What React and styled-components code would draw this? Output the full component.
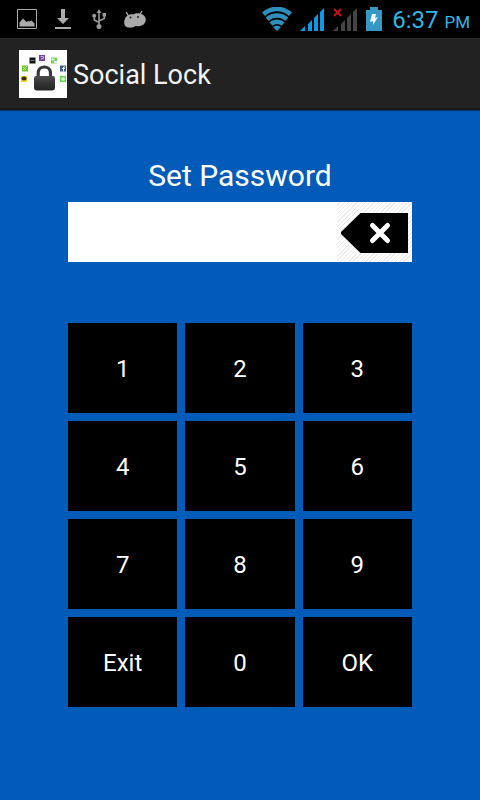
import React, { useState } from 'react';
import styled, { createGlobalStyle } from 'styled-components';

const GlobalStyle = createGlobalStyle`
  *, *::before, *::after { box-sizing: border-box; }
  body {
    margin: 0;
    background: #035bb9;
    font-family: Roboto, "Noto Sans", sans-serif;
  }
`;

const Screen = styled.div`
  display: flex;
  flex-direction: column;
  min-height: 100vh;
  background: #035bb9;
  color: #fff;
`;

const StatusBar = styled.header`
  display: flex;
  align-items: center;
  justify-content: space-between;
  height: 38px;
  padding: 0 10px 0 17px;
  background: #000;
`;

const Notifications = styled.div`
  display: flex;
  align-items: center;
  gap: 18px;
`;

const Indicators = styled.div`
  display: flex;
  align-items: center;
  gap: 8px;
`;

const Icon = styled.svg`
  display: block;
  flex: none;
`;

const Clock = styled.time`
  padding: 4px 0 0 2px;
  font-size: 24px;
  line-height: 34px;
  white-space: nowrap;
  color: #33b5e5;
`;

const Meridiem = styled.span`
  font-size: 17px;
`;

const ActionBar = styled.div`
  display: flex;
  align-items: center;
  gap: 6px;
  height: 72px;
  padding: 0 19px;
  background: #222;
  border-top: 1px solid #2c2a2a;
  border-bottom: 2px solid #191919;
  box-shadow: 0 1px 1px rgba(0, 0, 0, 0.4);
`;

const AppTitle = styled.h1`
  margin: 0;
  padding-top: 2px;
  font-size: 27px;
  line-height: 36px;
  font-weight: 400;
  color: #f3f3f3;
`;

const Content = styled.main`
  display: flex;
  flex-direction: column;
  padding: 48px 68px 92px;
`;

const FieldLabel = styled.label`
  padding-bottom: 8px;
  font-size: 30px;
  line-height: 36px;
  text-align: center;
`;

const Field = styled.div`
  display: flex;
  height: 60px;
  background: #fff;
`;

const PasswordInput = styled.input`
  flex: 1;
  min-width: 0;
  padding: 0 12px;
  border: 0;
  outline: 0;
  background: transparent;
  font: inherit;
  font-size: 28px;
  color: #000;
`;

const EraseButton = styled.button`
  flex: none;
  padding: 0;
  border: 0;
  background: repeating-linear-gradient(135deg, #fff 0 2px, #ececec 2px 3px);
  cursor: pointer;
`;

const Keypad = styled.div`
  display: grid;
  grid-template-columns: repeat(3, 1fr);
  grid-auto-rows: 90px;
  gap: 8px;
  margin-top: 61px;
`;

const Key = styled.button`
  padding: 2px 0 0;
  border: 0;
  background: #000;
  color: #fff;
  font: inherit;
  font-size: 24px;
  line-height: 28px;
  cursor: pointer;
`;

const keys = ['1', '2', '3', '4', '5', '6', '7', '8', '9', 'Exit', '0', 'OK'];

const PictureIcon = () => (
  <Icon width="20" height="20" viewBox="0 0 20 20" aria-hidden="true">
    <path d="M.5.5h19v19H.5z" fill="none" stroke="#aaa" />
    <path d="M2.500 17.500V13.500l3.500-4 3.500 3.500 1.500-1 2 .5 1.500-1 2 2 1 1v3z" fill="#aaa" />
  </Icon>
);

const DownloadIcon = () => (
  <Icon width="16" height="20" viewBox="0 0 16 20" aria-hidden="true">
    <path d="M6 0h4v9h4l-6 6-6-6h4zM0 18h16v2H0z" fill="#aaa" />
  </Icon>
);

const UsbIcon = () => (
  <Icon width="17" height="20" viewBox="-3 0 17 20" aria-hidden="true">
    <path d="M7 16V3M7 13.500L2.300 11V7M7 12l5.300-2.500V5" fill="none" stroke="#999" strokeWidth="1.600" />
    <path d="M7 0l2.500 4H4.500z" fill="#999" />
    <circle cx="7" cy="17.500" r="2.500" fill="#999" />
    <circle cx="2.200" cy="6.800" r="2" fill="#999" />
    <path d="M10.500 4h3.500v3.500h-3.500z" fill="#999" />
  </Icon>
);

const RobotIcon = () => (
  <Icon width="22" height="18" viewBox="0 0 22 18" aria-hidden="true">
    <path d="M2.200 2L4.500 6M18 1l-2.500 4" stroke="#aaa" strokeWidth="1.400" fill="none" />
    <path
      d="M3 6C5 4.500 7 4 9 4.500C11 3.200 14 3 16 3.500C20 4.500 22 7 21.800 10C21.500 13.500 19 15.500 16 16C14.500 16.300 13 16.300 11.500 16C10 17.200 7.500 17.800 5 17.600C2 17.400 .2 16 .2 13C.2 10 1 7.500 3 6z"
      fill="#aaa"
    />
    <circle cx="6.500" cy="7.500" r="1" fill="#222" />
    <circle cx="14" cy="7" r="1" fill="#222" />
  </Icon>
);

const WifiIcon = () => (
  <Icon width="30" height="24" viewBox="0 0 30 24" aria-hidden="true">
    <g fill="none" stroke="#2e8ebc" strokeWidth="4.600">
      <path d="M1.500 7.200a20 20 0 0 1 27 0" />
      <path d="M5.200 12.300a14.500 14.500 0 0 1 19.600 0" />
      <path d="M8.900 17a9.200 9.200 0 0 1 12.200 0" />
    </g>
    <path d="M11 20q4-3 8 0L15 24z" fill="#2e8ebc" />
  </Icon>
);

const SignalIcon = ({ color, missing }) => (
  <Icon width="25" height="24" viewBox="0 0 25 24" aria-hidden="true">
    <path
      d="M0 24l5-5v5zM8 24v-7l4-4v11zM14 24V11l4-4v17zM20 24V5l4-4v23z"
      fill={color}
    />
    {missing && <path d="M1 2l7 7M8 2L1 9" stroke="#c4141a" strokeWidth="1.800" fill="none" />}
  </Icon>
);

const BatteryIcon = () => (
  <Icon width="16" height="24" viewBox="0 0 16 24" aria-hidden="true">
    <path d="M4 0h8v3h4v21H0V3h4z" fill="#3598c5" />
    <path d="M6 7h4l-1 4 3-1-5 8v-4l-3 1z" fill="#eef8fc" />
  </Icon>
);

const AppIcon = () => (
  <Icon width="48" height="48" viewBox="0 0 48 48" aria-hidden="true">
    <defs>
      <linearGradient id="body" x1="0" y1="0" x2="0" y2="1">
        <stop offset="0" stopColor="#4c4c4c" />
        <stop offset="0.500" stopColor="#343434" />
        <stop offset="1" stopColor="#242424" />
      </linearGradient>
    </defs>
    <path d="M0 0h48v48H0z" fill="#fff" />
    <path d="M19.200 28v-5c0-8 12.300-8 12.300 0v5" fill="none" stroke="#383838" strokeWidth="3.200" />
    <path d="M17 26h17q2 0 2 3v8.500q0 3-3 3H18q-3 0-3-3V29q0-3 2-3z" fill="url(#body)" />
    <path d="M10.500 7.500h6v6h-6z" fill="#151515" />
    <path d="M11.500 10.500h4" stroke="#777" />
    <path d="M20 5h6v6h-6z" fill="#74439c" />
    <path d="M21.500 6.500h3v2h-2v1" stroke="#cbb5dc" fill="none" />
    <path d="M32 7.500h6v6h-6z" fill="#74d14e" />
    <path d="M32.500 9.500h3M35 12h3" stroke="#e6f4ff" strokeWidth="2" />
    <path d="M3 15.500h6v6H3z" fill="#6dbf2d" />
    <path d="M4 20l4-4M4 17l3 3" stroke="#c5eba3" />
    <path d="M41 15.500h6v6h-6z" fill="#3c5b9d" />
    <path d="M44.500 21.500v-4.500h1.500M43 18.500h3" stroke="#fff" fill="none" />
    <path d="M2 26h6v6H2z" fill="#e8d52a" />
    <ellipse cx="5" cy="28.500" rx="2.500" ry="2" fill="#3b2a1c" />
    <path d="M41 26h6v6h-6z" fill="#64d751" />
    <ellipse cx="44" cy="29" rx="2.200" ry="1.700" fill="#d8f7d0" />
  </Icon>
);

const EraseIcon = () => (
  <Icon width="75" height="60" viewBox="-3 0 75 60" aria-hidden="true">
    <path d="M1 30L20.500 11H68v40H20.500L1 32z" fill="#000" />
    <path d="M32.500 23.500l15 15M47.500 23.500l-15 15" stroke="#fff" strokeWidth="5" strokeLinecap="round" />
  </Icon>
);

export default function App() {
  const [password, setPassword] = useState('');

  const press = (key) => {
    if (key === 'Exit') setPassword('');
    else if (key !== 'OK') setPassword((value) => value + key);
  };

  return (
    <Screen>
      <GlobalStyle />
      <StatusBar>
        <Notifications>
          <PictureIcon />
          <DownloadIcon />
          <UsbIcon />
          <RobotIcon />
        </Notifications>
        <Indicators>
          <WifiIcon />
          <SignalIcon color="#0d9ae3" />
          <SignalIcon color="#444" missing />
          <BatteryIcon />
          <Clock>
            6:37 <Meridiem>PM</Meridiem>
          </Clock>
        </Indicators>
      </StatusBar>
      <ActionBar>
        <AppIcon />
        <AppTitle>Social Lock</AppTitle>
      </ActionBar>
      <Content>
        <FieldLabel htmlFor="password">Set Password</FieldLabel>
        <Field>
          <PasswordInput
            id="password"
            type="password"
            value={password}
            onChange={(event) => setPassword(event.target.value)}
          />
          <EraseButton
            type="button"
            aria-label="Erase"
            onClick={() => setPassword((value) => value.slice(0, -1))}
          >
            <EraseIcon />
          </EraseButton>
        </Field>
        <Keypad>
          {keys.map((key) => (
            <Key key={key} type="button" onClick={() => press(key)}>
              {key}
            </Key>
          ))}
        </Keypad>
      </Content>
    </Screen>
  );
}
